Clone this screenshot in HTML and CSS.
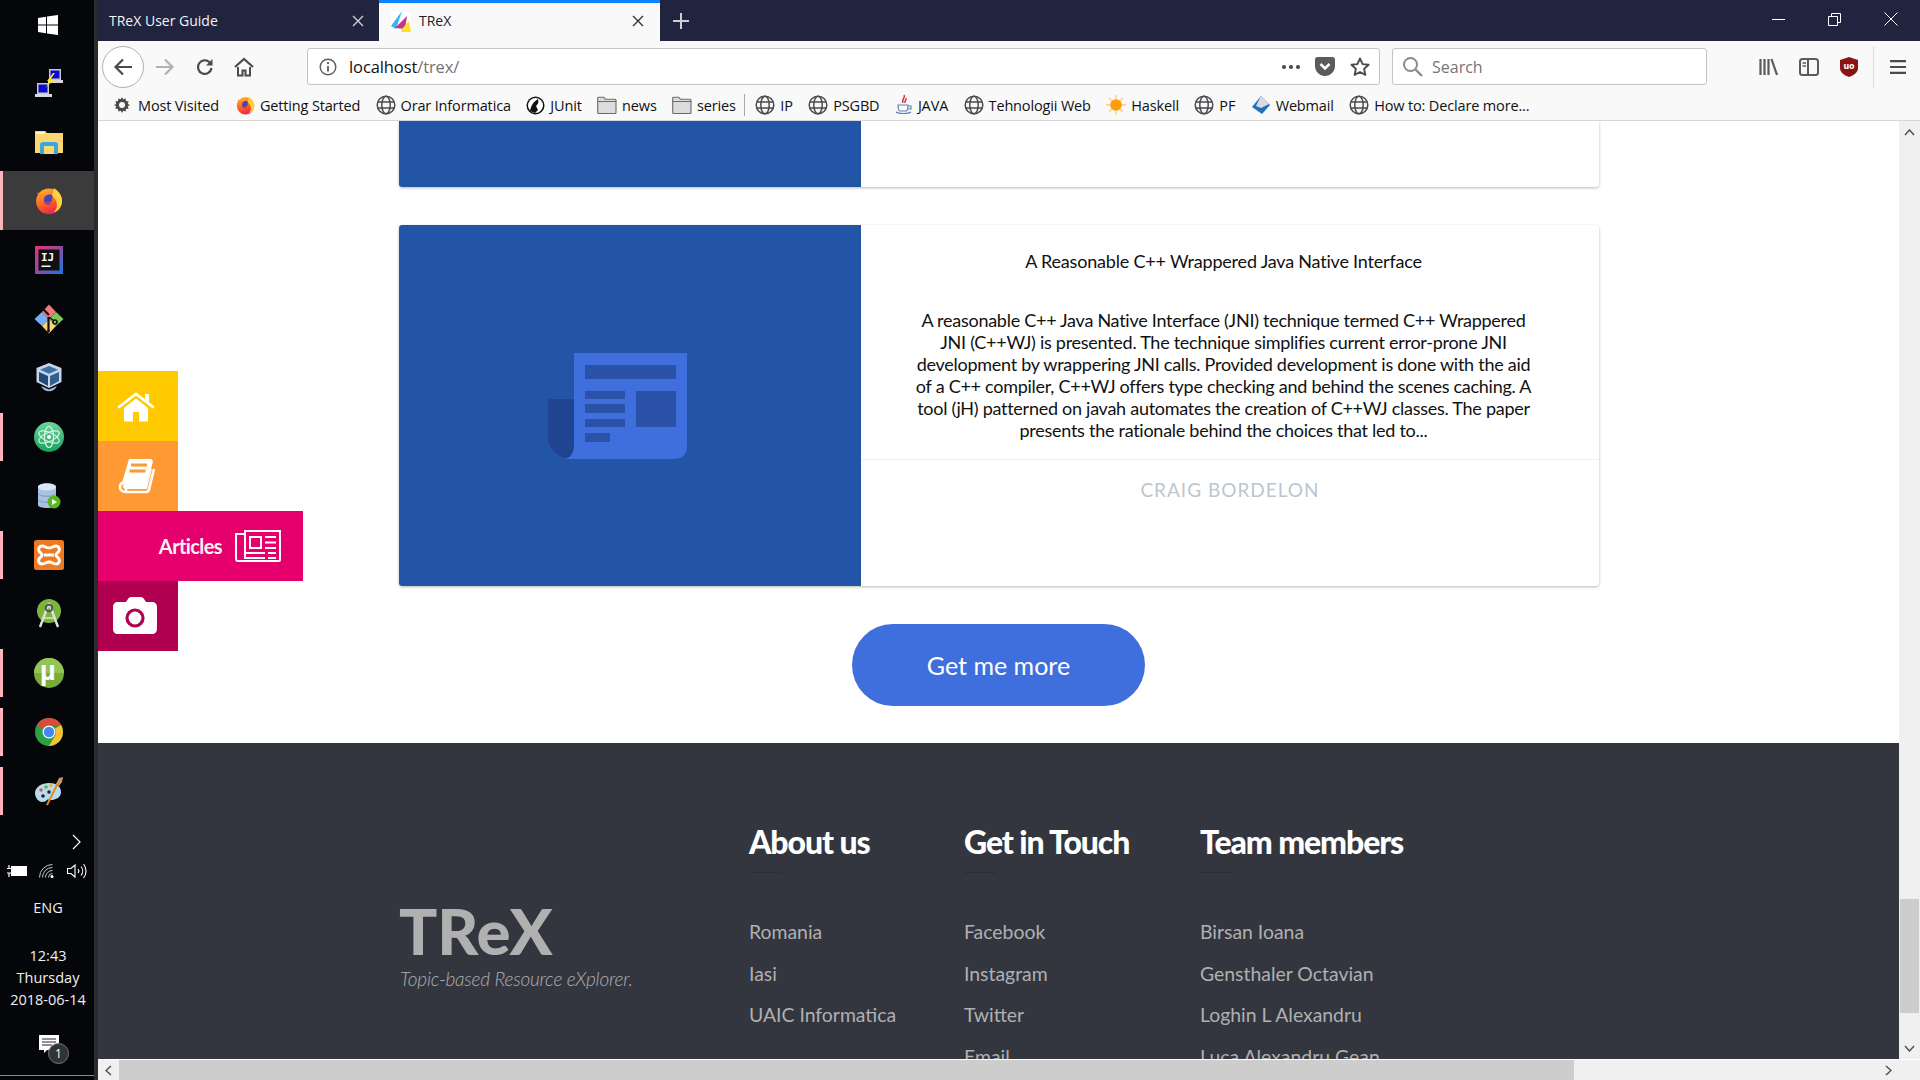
FILE: index.html
```html
<!DOCTYPE html>
<html lang="en">
<head>
<meta charset="utf-8">
<title>TReX</title>
<link rel="stylesheet" href="styles.css">
</head>
<body>
<svg class="defs" width="0" height="0" aria-hidden="true">
  <defs>
    <symbol id="globe" viewBox="0 0 20 20">
      <g fill="none" stroke="#4a4a4f" stroke-width="1.5">
        <circle cx="10" cy="10" r="8.8"/>
        <ellipse cx="10" cy="10" rx="4.2" ry="8.8"/>
        <path d="M1.8 7h16.4M1.8 13h16.4"/>
      </g>
    </symbol>
    <symbol id="bmfolder" viewBox="0 0 20 18">
      <path d="M.7 16.5V2.2c0-.6.4-1 1-1h5l1.6 2h9.7c.6 0 1 .4 1 1v12.3c0 .6-.4 1-1 1H1.700c-.6 0-1-.4-1-1z" fill="#dcdcdc" stroke="#6b6b6b" stroke-width="1.100"/>
      <path d="M.7 5.500h18.600" stroke="#6b6b6b" stroke-width="1"/>
    </symbol>
    <linearGradient id="ffg" x1="0.2" y1="0" x2="0.6" y2="1">
      <stop offset="0" stop-color="#ffb52e"/><stop offset=".5" stop-color="#ff6a1f"/><stop offset="1" stop-color="#e8204f"/>
    </linearGradient>
    <symbol id="firefox" viewBox="0 0 30 30">
      <circle cx="15" cy="15.500" r="13.800" fill="url(#ffg)"/>
      <path d="M20 1c5.500 3 9 8 9 14 0 6-4 11-9 12 3.500-3 4.500-7.500 2.500-12-1-3-3-5-5-6 2-2 2.500-5 2.500-8z" fill="#ffd23d"/>
      <path d="M11 10c2-2 5-2.500 7-1.500 1.500 1 1 2.500 0 3 1 1.500.5 4-2 5-2 .7-4 0-5-1 1 2 4 3 7 2-2 2-5 2-7 .5-2-2-2-6 0-8z" fill="#4a3fc0"/>
      <path d="M3 5c1 2 2 3 4 3 1 0 3 0 5-1-3 2-4.500 4-5 7-2-2-5-5-4-9z" fill="#ff8a1f"/>
    </symbol>
  </defs>
</svg>

<div class="desktop">
  <aside class="taskbar">
    <div class="start">
      <svg width="20" height="20" viewBox="0 0 20 20"><path fill="#fff" d="M0 3l8-1.200V9.500H0zM9 1.600L20 0v9.500H9zM0 10.500h8v7.700L0 17zM9 10.500h11V20L9 18.400z"/></svg>
    </div>
    <div class="app">
      <svg width="30" height="30" viewBox="0 0 30 30">
        <rect x="15" y="1" width="12" height="11" fill="#c9c9c9"/><rect x="16.500" y="2.500" width="9" height="8" fill="#0a0ad0"/><path d="M14 12h15v3H14z" fill="#d8d8d8"/>
        <rect x="3" y="15" width="12" height="11" fill="#c9c9c9"/><rect x="4.500" y="16.500" width="9" height="8" fill="#0a0ad0"/><path d="M1 26h17v3H1z" fill="#d8d8d8"/>
        <path d="M19 5l-6 8h4l-6 7 9-8h-4l5-7z" fill="#ffe81f"/>
      </svg>
    </div>
    <div class="app">
      <svg width="28" height="24" viewBox="0 0 28 24">
        <path d="M0 3V1h10l2 2h16v20H0z" fill="#fcd672"/><path d="M1 2h8l1 2H1z" fill="#fff4c8"/>
        <path d="M5 24V15c0-2 1-3 3-3h12c2 0 3 1 3 3v9h-4v-8H9v8z" fill="#37a8de"/><path d="M9 20h10v4H9z" fill="#fcd672"/>
      </svg>
    </div>
    <div class="app app-active app-open">
      <svg width="28" height="28"><use href="#firefox"/></svg>
    </div>
    <div class="app">
      <svg width="28" height="28" viewBox="0 0 28 28">
        <defs><linearGradient id="ijg" x1="0" y1="0" x2="1" y2="1"><stop offset="0" stop-color="#f0306e"/><stop offset=".5" stop-color="#8f4ba0"/><stop offset="1" stop-color="#0d7ae8"/></linearGradient></defs>
        <rect width="28" height="28" fill="url(#ijg)"/><rect x="3.500" y="3.500" width="21" height="21" fill="#111"/>
        <text x="6" y="15" class="ij">IJ</text><rect x="6.500" y="19.500" width="9" height="1.500" fill="#fff"/>
      </svg>
    </div>
    <div class="app">
      <svg width="30" height="30" viewBox="0 0 30 30">
        <path d="M15 15L8 8 .5 15 8 22z" fill="#78aef5"/><path d="M15 15l7-7 7.500 7-7.500 7z" fill="#7fc65a"/>
        <path d="M15 15l-7 7 7 7.500 7-7.500z" fill="#f7d77a"/><path d="M15 15L8 8l7-7.500L22 8z" fill="#f07b7b"/>
        <path d="M8 4l7 7M14.500 13v13" stroke="#111" stroke-width="2.200"/><circle cx="14.500" cy="27" r="1.500" fill="#111"/><circle cx="21" cy="18" r="2" fill="none" stroke="#111" stroke-width="1.600"/><path d="M15 13l5 4" stroke="#111" stroke-width="1.600"/>
      </svg>
    </div>
    <div class="app">
      <svg width="26" height="30" viewBox="0 0 26 30">
        <path d="M13 0l12.500 5v14L13 25 .5 19V5z" fill="#c6d6ea"/><path d="M13 3l9 3.800-9 4-9-4z" fill="#3f6fa3"/>
        <path d="M3 9l9 4v10l-9-5z" fill="#234a78"/><path d="M14 13l9-4v9l-9 5z" fill="#33608f"/>
        <path d="M5 23c3 7 13 7 16 0l-8 3.500z" fill="#9eb6d4"/>
      </svg>
    </div>
    <div class="app app-open">
      <svg width="30" height="30" viewBox="0 0 30 30">
        <defs><linearGradient id="atg" x1="0" y1="0" x2="0" y2="1"><stop offset="0" stop-color="#6ed49a"/><stop offset="1" stop-color="#16a05f"/></linearGradient></defs>
        <circle cx="15" cy="15" r="15" fill="url(#atg)"/>
        <g fill="none" stroke="#d6f5e3" stroke-width="1.200"><ellipse cx="15" cy="15" rx="11" ry="4.500" transform="rotate(25 15 15)"/><ellipse cx="15" cy="15" rx="11" ry="4.500" transform="rotate(-25 15 15)"/><ellipse cx="15" cy="15" rx="4.500" ry="10.500"/></g>
        <circle cx="15" cy="15" r="2" fill="#fff"/>
      </svg>
    </div>
    <div class="app">
      <svg width="24" height="26" viewBox="0 0 24 26">
        <path d="M1 4c0-5 18-5 18 0v18c0 4-18 4-18 0z" fill="#a9c2e2"/><ellipse cx="10" cy="4" rx="9" ry="3.500" fill="#d9e6f5"/><path d="M1 11c3 3 15 3 18 0M1 17c3 3 15 3 18 0" fill="none" stroke="#7e9cc2"/>
        <circle cx="17" cy="19" r="6.500" fill="#57b81f"/><path d="M15 16l5 3-5 3z" fill="#fff"/>
      </svg>
    </div>
    <div class="app app-open">
      <svg width="30" height="30" viewBox="0 0 30 30">
        <rect width="30" height="30" rx="2.500" fill="#f07a21"/>
        <path d="M8 6c3 0 4 2 7 2s4-2 7-2c3 0 4 3 3 5s-3 2-3 4 2 2 3 4 0 5-3 5c-3 0-4-2-7-2s-4 2-7 2c-3 0-4-3-3-5s3-2 3-4-2-2-3-4 0-5 3-5zM10 15h10" fill="none" stroke="#fff" stroke-width="3"/>
      </svg>
    </div>
    <div class="app">
      <svg width="24" height="29" viewBox="0 0 24 29">
        <circle cx="12" cy="12" r="12" fill="#7cb53c"/><path d="M12 4l-9 24M12 4l9 24" stroke="#dfe3da" stroke-width="2.400"/><circle cx="12" cy="9" r="3.200" fill="none" stroke="#555" stroke-width="2"/><path d="M6 19h12" stroke="#dfe3da" stroke-width="1.500"/>
      </svg>
    </div>
    <div class="app app-open">
      <svg width="30" height="30" viewBox="0 0 30 30">
        <circle cx="15" cy="15" r="15" fill="#78ad3c"/><path d="M15 0a15 15 0 0 1 15 15H0A15 15 0 0 1 15 0z" fill="#94c457"/>
        <text x="6" y="22" class="mu">µ</text>
      </svg>
    </div>
    <div class="app app-open">
      <svg width="28" height="28" viewBox="0 0 28 28">
        <circle cx="14" cy="14" r="14" fill="#2f9e44"/>
        <path d="M14 0a14 14 0 0 1 12.100 7H14a7 7 0 0 0-6.100 3.500L1.900 7A14 14 0 0 1 14 0z" fill="#dd4a3c"/>
        <path d="M26.100 7A14 14 0 0 1 14 28l6.100-10.500A7 7 0 0 0 20 10.500L26.100 7z" fill="#fbc02d"/>
        <circle cx="14" cy="14" r="6.500" fill="#fff"/><circle cx="14" cy="14" r="5.200" fill="#4285f4"/>
      </svg>
    </div>
    <div class="app app-open">
      <svg width="30" height="30" viewBox="0 0 30 30">
        <path d="M1 17c0-6 7-10 14-10s12 3 12 9-6 8-10 8c-2 0-3-1-4 0s-2 2-5 2-7-4-7-9z" fill="#b7dcf2"/>
        <circle cx="7" cy="14" r="1.800" fill="#e9524a"/><circle cx="12" cy="11" r="1.800" fill="#5db548"/><circle cx="17" cy="9.500" r="1.800" fill="#f2b632"/><circle cx="9" cy="20" r="1.800" fill="#222"/><circle cx="15" cy="16" r="1.800" fill="#222"/>
        <path d="M13 29L24 7" stroke="#e8871e" stroke-width="2"/><path d="M22 8l3-6 4-1-1 5-3 4z" fill="#c9995a"/>
      </svg>
    </div>
    <div class="chevron">
      <svg width="10" height="16" viewBox="0 0 10 16"><path d="M1 1l7 7-7 7" fill="none" stroke="#fff" stroke-width="1.200"/></svg>
    </div>
    <div class="tray">
      <svg width="20" height="12" viewBox="0 0 20 12"><rect x="4.500" y="1.500" width="15" height="9" fill="#fff" stroke="#fff"/><path d="M0 3.500h4M0 8h4M2 0v3M2 12V8" stroke="#fff" stroke-width="1.200"/></svg>
      <svg width="16" height="14" viewBox="0 0 16 14"><g fill="none" stroke="#c9c9c9" stroke-width="1"><path d="M.5 13.500A13 13 0 0 1 13.500.5"/><path d="M3.500 13.500A10 10 0 0 1 13.500 3.500"/><path d="M6.500 13.500A7 7 0 0 1 13.500 6.500"/><path d="M9.500 13.500a4 4 0 0 1 4-4"/></g><circle cx="13" cy="12.500" r="1.500" fill="#fff"/></svg>
      <svg width="20" height="16" viewBox="0 0 20 16"><g fill="none" stroke="#fff" stroke-width="1.100"><path d="M.5 5.500H4L8 2v12l-4-3.500H.5z"/><path d="M11 6a3 3 0 0 1 0 4M14 3.500a7 7 0 0 1 0 9M16.500 1a11 11 0 0 1 0 14"/></g></svg>
    </div>
    <div class="lang">ENG</div>
    <div class="clock"><div>12:43</div><div>Thursday</div><div>2018-06-14</div></div>
    <div class="notify">
      <svg width="20" height="18" viewBox="0 0 20 18"><path d="M0 0h20v15H8l-3 3v-3H0z" fill="#fff"/><path d="M3 4h14M3 7h14M3 10h10" stroke="#222"/></svg>
      <span class="notify-badge">1</span>
    </div>
  </aside>
  <div class="edge"></div>

  <div class="browser">
    <div class="tabstrip">
      <div class="tab">
        <span class="tab-title">TReX User Guide</span>
        <svg class="tab-x" width="12" height="12" viewBox="0 0 12 12"><path d="M1 1l10 10M11 1L1 11" stroke="#cfd0d6" stroke-width="1.400"/></svg>
      </div>
      <div class="tab tab-active">
        <svg class="favicon" width="20" height="21" viewBox="0 0 20 21"><rect width="20" height="21" fill="#fff"/><path d="M11 0L0 15l5 3z" fill="#35b5f0"/><path d="M16 5L4 17l10 1z" fill="#c5338c"/><path d="M10 19l8-9 2 11H10z" fill="#ffdd33"/></svg>
        <span class="tab-title">TReX</span>
        <svg class="tab-x" width="12" height="12" viewBox="0 0 12 12"><path d="M1 1l10 10M11 1L1 11" stroke="#333" stroke-width="1.400"/></svg>
      </div>
      <svg class="newtab" width="16" height="16" viewBox="0 0 16 16"><path d="M8 0v16M0 8h16" stroke="#cfd0d6" stroke-width="2"/></svg>
      <div class="winbtns">
        <svg width="13" height="13" viewBox="0 0 13 13"><path d="M0 6.500h13" stroke="#fff"/></svg>
        <svg width="13" height="13" viewBox="0 0 13 13"><path d="M.5 3.500h9v9h-9zM3.500 3V.500h9v9H10" fill="none" stroke="#fff"/></svg>
        <svg width="14" height="14" viewBox="0 0 14 14"><path d="M.5.500l13 13M13.500.500l-13 13" stroke="#fff"/></svg>
      </div>
    </div>

    <div class="navbar">
      <div class="backbtn"><svg width="20" height="18" viewBox="0 0 20 18"><path d="M19 9H3M10 1.500L2.500 9l7.500 7.500" fill="none" stroke="#4a4a4f" stroke-width="2.200"/></svg></div>
      <svg class="nav-fwd" width="20" height="18" viewBox="0 0 20 18"><path d="M1 9h16M10 1.500L17.500 9 10 16.500" fill="none" stroke="#b1b1b3" stroke-width="2.200"/></svg>
      <svg class="nav-reload" width="18" height="18" viewBox="0 0 18 18"><path d="M15.500 10a6.800 6.800 0 1 1-2-5.800" fill="none" stroke="#4a4a4f" stroke-width="2.200"/><path d="M16.500 1v6.500H10z" fill="#4a4a4f"/></svg>
      <svg class="nav-home" width="20" height="20" viewBox="0 0 20 20"><path d="M1 10l9-8 9 8" fill="none" stroke="#4a4a4f" stroke-width="2.200"/><path d="M4 10v8.500h4.500v-5h3v5H16V10" fill="none" stroke="#4a4a4f" stroke-width="2"/></svg>
      <div class="urlbar">
        <svg class="info" width="18" height="18" viewBox="0 0 18 18"><circle cx="9" cy="9" r="7.800" fill="none" stroke="#5a5a5f" stroke-width="1.400"/><path d="M9 8v5.500" stroke="#5a5a5f" stroke-width="1.800"/><circle cx="9" cy="5.200" r="1.100" fill="#5a5a5f"/></svg>
        <span class="url"><span class="url-host">localhost</span>/trex/</span>
        <svg class="dots" width="20" height="6" viewBox="0 0 20 6"><circle cx="3" cy="3" r="2.100" fill="#4a4a4f"/><circle cx="10" cy="3" r="2.100" fill="#4a4a4f"/><circle cx="17" cy="3" r="2.100" fill="#4a4a4f"/></svg>
        <svg class="pocket" width="20" height="19" viewBox="0 0 20 19"><path d="M0 2.500C0 1 1 0 2.500 0h15C19 0 20 1 20 2.500V9c0 5.500-4.500 10-10 10S0 14.500 0 9z" fill="#5a5a5f"/><path d="M5.500 7L10 11.500 14.500 7" fill="none" stroke="#fff" stroke-width="2.600"/></svg>
        <svg class="star" width="20" height="20" viewBox="0 0 20 20"><path d="M10 1.500l2.600 5.600 6 .7-4.500 4.100 1.300 6L10 15l-5.400 2.900 1.300-6-4.500-4.100 6-.7z" fill="none" stroke="#4a4a4f" stroke-width="1.900" stroke-linejoin="round"/></svg>
      </div>
      <div class="searchbar">
        <svg width="21" height="21" viewBox="0 0 21 21"><circle cx="8.500" cy="8.500" r="6.500" fill="none" stroke="#8c8c8f" stroke-width="2"/><path d="M13 13l7 7" stroke="#8c8c8f" stroke-width="2.400"/></svg>
        <span class="search-label">Search</span>
      </div>
      <div class="nav-right">
        <svg width="19" height="18" viewBox="0 0 19 18"><path d="M1.500 1v16M5.500 1v16M9.500 1v16" stroke="#5a5a5f" stroke-width="2.200"/><path d="M12.500 1l5.500 16" stroke="#5a5a5f" stroke-width="2.200"/></svg>
        <svg width="20" height="18" viewBox="0 0 20 18"><rect x="1" y="1" width="18" height="16" rx="2.500" fill="none" stroke="#5a5a5f" stroke-width="2"/><path d="M9 1v16" stroke="#5a5a5f" stroke-width="2"/><path d="M3.500 5H7M3.500 8H7" stroke="#5a5a5f" stroke-width="1.500"/></svg>
        <svg width="18" height="20" viewBox="0 0 18 20"><path d="M9 0l9 3v8c0 4-4 7.500-9 9-5-1.500-9-5-9-9V3z" fill="#8a1414"/><text x="9" y="12" class="ublock">uo</text></svg>
        <span class="nav-sep"></span>
        <svg width="16" height="14" viewBox="0 0 16 14"><path d="M0 1.200h16M0 7h16M0 12.800h16" stroke="#4a4a4f" stroke-width="2.200"/></svg>
      </div>
    </div>

    <div class="bookmarks">
      <span class="bm bm-first"><svg width="16" height="16" viewBox="0 0 16 16"><path d="M8 0l1.200 2.300 2.500-.8.300 2.600 2.600.3-.8 2.500L16 8l-2.200 1.200.8 2.500-2.600.3-.3 2.600-2.500-.8L8 16l-1.200-2.200-2.500.8-.3-2.600-2.600-.3.8-2.500L0 8l2.200-1.100-.8-2.500L4 4.100l.3-2.600 2.500.8z" fill="#4a4a4f"/><circle cx="8" cy="8" r="3" fill="#f9f9fa"/></svg>Most Visited</span>
      <span class="bm"><svg width="19" height="19"><use href="#firefox"/></svg>Getting Started</span>
      <span class="bm"><svg width="20" height="20"><use href="#globe"/></svg>Orar Informatica</span>
      <span class="bm"><svg width="19" height="19" viewBox="0 0 19 19"><circle cx="9.500" cy="9.500" r="9" fill="#111"/><circle cx="9.500" cy="9.500" r="7.500" fill="#fff"/><path d="M4 15c1-5 3-9 8-12 1 3 0 5-2 7l2 4-3 3z" fill="#111"/></svg>JUnit</span>
      <span class="bm"><svg width="20" height="18"><use href="#bmfolder"/></svg>news</span>
      <span class="bm"><svg width="20" height="18"><use href="#bmfolder"/></svg>series</span>
      <span class="bm-sep"></span>
      <span class="bm"><svg width="20" height="20"><use href="#globe"/></svg>IP</span>
      <span class="bm"><svg width="20" height="20"><use href="#globe"/></svg>PSGBD</span>
      <span class="bm"><svg width="18" height="22" viewBox="0 0 18 22"><path d="M9 1c2 3-3 4-1 8M11 4c1 2-2 3-1 5" fill="none" stroke="#c9302c" stroke-width="1.400"/><path d="M3 11h10c0 4-1 6-2 6H5c-1 0-2-2-2-6zM13 12h3v3h-3M1 18c3 2 12 2 15 0" fill="none" stroke="#5d82b3" stroke-width="1.200"/></svg>JAVA</span>
      <span class="bm"><svg width="20" height="20"><use href="#globe"/></svg>Tehnologii Web</span>
      <span class="bm"><svg width="20" height="20" viewBox="0 0 20 20"><g stroke="#ffd79a" stroke-width="1.800"><path d="M10 0v20M0 10h20M3 3l14 14M17 3L3 17"/></g><circle cx="10" cy="10" r="5.800" fill="#ff9d0a"/></svg>Haskell</span>
      <span class="bm"><svg width="20" height="20"><use href="#globe"/></svg>PF</span>
      <span class="bm"><svg width="20" height="20" viewBox="0 0 20 20"><path d="M10 1l9 9-8 9-10-7z" fill="#1f74b8"/><path d="M10 1l8 8-8 4-5-2z" fill="#d7dde3"/></svg>Webmail</span>
      <span class="bm"><svg width="20" height="20"><use href="#globe"/></svg>How to: Declare more...</span>
    </div>

    <div class="viewport">
      <div class="hrow">
        <main class="page">
          <section class="card card-stub"><div class="card-media"></div><div class="card-rest"></div></section>
          <article class="card card-full">
            <div class="card-media">
              <svg width="164" height="106" viewBox="0 0 164 106">
                <path d="M0 46h26v60H26C11 106 0 97 0 85z" fill="#1f4490"/>
                <path d="M26 0h113v94c0 7-5 12-12 12H15c8 0 11-7 11-14z" fill="#3f6fdc"/>
                <path d="M37 12h91v14H37zM37 38h40v8H37zM37 51h40v9H37zM37 66h40v8H37zM37 80h25v9H37zM88 38h40v36H88z" fill="#2a52a8"/>
              </svg>
            </div>
            <div class="card-body">
              <div class="card-text">
                <h2 class="card-title">A Reasonable C++ Wrappered Java Native Interface</h2>
                <p class="card-abstract">A reasonable C++ Java Native Interface (JNI) technique termed C++ Wrappered JNI (C++WJ) is presented. The technique simplifies current error-prone JNI development by wrappering JNI calls. Provided development is done with the aid of a C++ compiler, C++WJ offers type checking and behind the scenes caching. A tool (jH) patterned on javah automates the creation of C++WJ classes. The paper presents the rationale behind the choices that led to...</p>
              </div>
              <div class="card-author">CRAIG BORDELON</div>
            </div>
          </article>
          <div class="more-row"><a class="more-btn">Get me more</a></div>
          <footer class="footer">
            <div class="brand">
              <div class="brand-name">TReX</div>
              <div class="brand-tag">Topic-based Resource eXplorer.</div>
            </div>
            <div class="fcol fcol-about">
              <h3>About us</h3>
              <ul><li>Romania</li><li>Iasi</li><li>UAIC Informatica</li></ul>
            </div>
            <div class="fcol fcol-touch">
              <h3>Get in Touch</h3>
              <ul><li>Facebook</li><li>Instagram</li><li>Twitter</li><li>Email</li></ul>
            </div>
            <div class="fcol">
              <h3>Team members</h3>
              <ul><li>Birsan Ioana</li><li>Gensthaler Octavian</li><li>Loghin L Alexandru</li><li>Luca Alexandru Gean</li></ul>
            </div>
          </footer>
          <nav class="sidemenu">
            <a class="side side-home"><svg width="36" height="30" viewBox="0 0 36 30"><path d="M1 15L18 2l17 13" fill="none" stroke="#fff" stroke-width="2.800" stroke-linecap="round"/><path d="M27 2h4v9l-4-3z" fill="#fff"/><path d="M6 16L18 6.500 30 16v12c0 1-.5 1.500-1.500 1.500H21V20h-6v9.500H7.500C6.500 29.500 6 29 6 28z" fill="#fff"/></svg></a>
            <a class="side side-book"><svg width="38" height="36" viewBox="0 0 38 36"><path d="M11 0h21c2 0 3 1.500 2.500 3.500L29 25H8c-2 0-3 1-3 2.500S6 30 8 30h21l5-20" fill="#fff"/><path d="M11 0h21c2 0 3 1.500 2.500 3.500L29 25H8c-3 0-4 1-5 2z" fill="#fff"/><path d="M2 28c0-3 2-5 6-5v10c-4 0-6-2-6-5zM8 33h20c2 0 2.500-1 3-2.500L36 10" fill="none" stroke="#fff" stroke-width="2.600"/><path d="M13 6h16M11.500 12h16" stroke="#ff9933" stroke-width="3"/></svg></a>
            <a class="side side-articles"><span class="side-label">Articles</span><svg width="46" height="32" viewBox="0 0 46 32"><g fill="none" stroke="#fff" stroke-width="2"><path d="M10 3V1h35v29c0 .6-.4 1-1 1H3c-1 0-2-1-2-2V4h9v25"/><rect x="15" y="7" width="11" height="11"/></g><path d="M30 7h11M30 12.500h11M30 18h11M11 23h19M33 23h8M11 28h19M33 28h8" stroke="#fff" stroke-width="2"/></svg></a>
            <a class="side side-cam"><svg width="44" height="38" viewBox="0 0 44 38"><path d="M13 5l2-3c.6-1 1.500-2 3-2h10c1.500 0 2.400 1 3 2l2 3h6c3 0 5 2 5 5v22c0 3-2 5-5 5H5c-3 0-5-2-5-5V10c0-3 2-5 5-5z" fill="#fff"/><circle cx="22" cy="21" r="8" fill="none" stroke="#b0004f" stroke-width="3.200"/></svg></a>
          </nav>
        </main>
        <div class="vscroll">
          <svg class="sarrow" width="11" height="7" viewBox="0 0 11 7"><path d="M1 6l4.500-5L10 6" fill="none" stroke="#505050" stroke-width="1.500"/></svg>
          <div class="vtrack"><div class="vthumb"></div></div>
          <svg class="sarrow" width="11" height="7" viewBox="0 0 11 7"><path d="M1 1l4.500 5L10 1" fill="none" stroke="#505050" stroke-width="1.500"/></svg>
        </div>
      </div>
      <div class="hscroll">
        <svg class="harrow" width="7" height="11" viewBox="0 0 7 11"><path d="M6 1L1 5.500 6 10" fill="none" stroke="#505050" stroke-width="1.500"/></svg>
        <div class="htrack"><div class="hthumb"></div></div>
        <svg class="harrow" width="7" height="11" viewBox="0 0 7 11"><path d="M1 1l5 4.500L1 10" fill="none" stroke="#505050" stroke-width="1.500"/></svg>
      </div>
    </div>
  </div>
</div>
</body>
</html>
```
FILE: styles.css
```css
* { box-sizing: border-box; }
html, body { margin: 0; padding: 0; width: 1920px; height: 1080px; overflow: hidden; }
body { font-family: "Open Sans", "Noto Sans", sans-serif; background: #000; }
svg { display: block; flex: none; }
.defs { position: absolute; }
.desktop { display: flex; width: 1920px; height: 1080px; }

/* Taskbar */
.taskbar { width: 94px; height: 1080px; background: #04060a; display: flex; flex-direction: column; color: #f0f0f0; font-size: 14.5px; position: relative; }
.taskbar::after { content: ""; position: absolute; left: 0; right: 0; top: 1075px; height: 1px; background: #8a8a8a; }
.edge { width: 4px; background: #2b2b2b; }
.start { height: 53px; display: flex; align-items: center; justify-content: center; padding: 0 0 3px 2px; }
.app { height: 59px; display: flex; align-items: center; justify-content: center; position: relative; padding-left: 4px; }
.app-open::before { content: ""; position: absolute; left: 0; top: 6px; width: 3px; height: 48px; background: #ffb3ba; }
.app-active { background: #3b3b3b; }
.app-active::before { top: 0; height: 59px; }
.ij { font: 700 11px "DejaVu Sans Mono", monospace; fill: #fff; }
.mu { font: 700 27px "Liberation Sans", sans-serif; fill: #fff; }
.chevron { height: 16px; margin-top: 14px; padding-left: 72px; }
.tray { display: flex; align-items: center; justify-content: space-between; padding: 0 7px; margin-top: 13px; height: 16px; }
.lang { text-align: center; margin-top: 19px; line-height: 20px; padding-left: 2px; }
.clock { text-align: center; margin-top: 27px; line-height: 22px; padding-left: 2px; }
.notify { position: relative; margin: 24px 0 0 39px; width: 20px; height: 18px; }
.notify-badge { position: absolute; left: 9px; top: 8px; width: 21px; height: 21px; border-radius: 50%; background: #333; border: 1px solid #777; color: #fff; font-size: 12px; line-height: 19px; text-align: center; }

/* Browser chrome */
.browser { width: 1822px; height: 1080px; display: flex; flex-direction: column; background: #f9f9fa; }
.tabstrip { height: 41px; background: #20243f; display: flex; align-items: stretch; flex: none; }
.tab { width: 281px; display: flex; align-items: center; padding: 0 15px 0 11px; color: #f4f4f6; font-size: 14px; }
.tab-title { flex: 1; }
.tab-active { background: #f9f9fa; color: #222; border-top: 3px solid #0a84ff; padding: 0 16px 3px 12px; width: 281px; }
.tab-active .tab-title { margin-left: 8px; }
.favicon { margin-top: 2px; }
.newtab { align-self: center; margin-left: 13px; }
.winbtns { margin-left: auto; display: flex; align-items: center; gap: 43px; padding-right: 22px; padding-bottom: 3px; }

.navbar { height: 48px; flex: none; display: flex; align-items: center; padding-top: 3px; }
.backbtn { width: 42px; height: 42px; border: 1px solid #b1b1b3; border-radius: 50%; background: #fff; margin-left: 4px; display: flex; align-items: center; justify-content: center; }
.nav-fwd { margin-left: 11px; }
.nav-reload { margin-left: 21px; }
.nav-home { margin-left: 20px; }
.urlbar { width: 1073px; height: 37px; margin-left: 53px; background: #fff; border: 1px solid #c4c4c6; border-radius: 3px; display: flex; align-items: center; padding: 0 9px 0 11px; }
.info { margin-right: 12px; }
.url { flex: 1; font-size: 16.5px; color: #737373; letter-spacing: -0.1px; }
.url-host { color: #111; }
.dots { margin-right: 14px; }
.pocket { margin-right: 15px; }
.searchbar { width: 315px; height: 37px; margin-left: 12px; background: #fff; border: 1px solid #c4c4c6; border-radius: 3px; display: flex; align-items: center; padding-left: 9px; gap: 9px; }
.search-label { font-size: 16px; color: #757575; }
.nav-right { display: flex; align-items: center; margin-left: 52px; }
.nav-right svg:nth-child(2) { margin-left: 21px; }
.nav-right svg:nth-child(3) { margin-left: 21px; }
.nav-sep { width: 1px; height: 42px; background: #dcdcde; margin: 0 16px 0 15px; }
.ublock { font: 700 8px "DejaVu Sans", sans-serif; fill: #fff; text-anchor: middle; }

.bookmarks { height: 32px; flex: none; display: flex; align-items: center; border-bottom: 1px solid #d6d6d8; font-size: 14.5px; color: #111; padding: 1px 0 0 16px; white-space: nowrap; letter-spacing: -0.15px; }
.bm { display: inline-flex; align-items: center; gap: 5px; margin-right: 15.4px; }
.bm-first { margin-right: 17px; gap: 8px; }
.bm-sep { width: 1px; height: 22px; background: #a8a8aa; margin: 0 10px 0 -7px; }

/* Viewport */
.viewport { flex: 1; min-height: 0; display: flex; flex-direction: column; background: #fff; }
.hrow { flex: 1; min-height: 0; display: flex; }
.page { flex: 1; min-width: 0; overflow: hidden; position: relative; font-family: Lato, "Liberation Sans", sans-serif; background: #fff; }
.card { width: 1200px; margin-left: 301px; display: flex; background: #fff; border-radius: 3px; box-shadow: 0 1px 3px rgba(0, 0, 0, .28); overflow: hidden; }
.card-stub { height: 66px; border-radius: 0 0 3px 3px; }
.card-full { height: 361px; margin-top: 38px; }
.card-media { width: 462px; flex: none; background: #2355a6; display: flex; align-items: center; justify-content: center; }
.card-rest { flex: 1; }
.card-body { flex: 1; display: flex; flex-direction: column; }
.card-text { height: 235px; border-bottom: 1px solid #eef0f3; padding: 25px 63px 0 50px; text-align: center; color: #111; }
.card-title { margin: 0; font-size: 18px; font-weight: 400; line-height: 22px; letter-spacing: -0.2px; }
.card-abstract { margin: 37px 0 0; font-size: 18px; line-height: 22px; letter-spacing: -0.27px; }
.card-author { text-align: center; color: #bcc6cf; font-size: 19px; line-height: 22px; letter-spacing: 1px; padding-top: 19px; }
.more-row { display: flex; justify-content: center; padding: 38px 0 37px; }
.more-btn { width: 293px; height: 82px; border-radius: 41px; background: #3f6fdc; color: #fff; font-size: 25px; line-height: 82px; text-align: center; }

/* Footer */
.footer { background: #33363f; height: 400px; display: flex; padding-left: 301px; position: relative; }
.brand { width: 350px; padding-top: 157px; flex: none; }
.brand-name { font-size: 63.5px; line-height: 62px; font-weight: 900; color: #b0b0b0; }
.brand-tag { font-size: 19px; line-height: 22px; font-weight: 300; font-style: italic; color: #b0b0b0; margin: 6px 0 0 1px; letter-spacing: -0.2px; }
.fcol { flex: none; }
.fcol-about { width: 215px; }
.fcol-touch { width: 236px; }
.fcol h3 { margin: 0; padding-top: 79px; font-size: 32px; line-height: 40px; font-weight: 900; color: #fff; letter-spacing: -1.1px; position: relative; height: 131px; }
.fcol h3::after { content: ""; position: absolute; left: 0; top: 129px; width: 32px; height: 1px; background: #2b2e36; }
.fcol ul { list-style: none; margin: 46px 0 0; padding: 0; }
.fcol li { font-size: 19.4px; line-height: 24px; margin-bottom: 17.5px; color: #b0b0b0; }

/* Side menu */
.sidemenu { position: absolute; left: 0; top: 250px; width: 80px; display: flex; flex-direction: column; }
.side { height: 70px; width: 80px; display: flex; align-items: center; justify-content: center; color: #f4f4f6; }
.side-home { background: #ffcb00; padding: 2px 4px 0 0; }
.side-book { background: #ff9933; padding: 1px 2px 0 0; }
.side-articles { background: #e6006e; width: 205px; justify-content: flex-end; padding-right: 22px; }
.side-label { font-size: 20px; font-weight: 700; letter-spacing: -0.6px; margin-right: 13px; }
.side-cam { background: #b0004f; padding-right: 6px; }

/* Scrollbars */
.vscroll { width: 21px; flex: none; background: #f0f0f0; display: flex; flex-direction: column; align-items: center; padding: 4px 0 3px; }
.vtrack { flex: 1; width: 19px; position: relative; }
.vthumb { position: absolute; left: 0; right: 0; top: 759px; height: 114px; background: #cdcdcd; }
.sarrow { margin: 4px 0; }
.hscroll { height: 21px; flex: none; border-top: 1px solid #fff; background: #f0f0f0; display: flex; align-items: center; padding: 0 28px 0 7px; }
.htrack { flex: 1; height: 20px; position: relative; margin: 0 7px; }
.hthumb { position: absolute; left: 0; top: 0; bottom: 0; width: 1455px; background: #cdcdcd; }
```
